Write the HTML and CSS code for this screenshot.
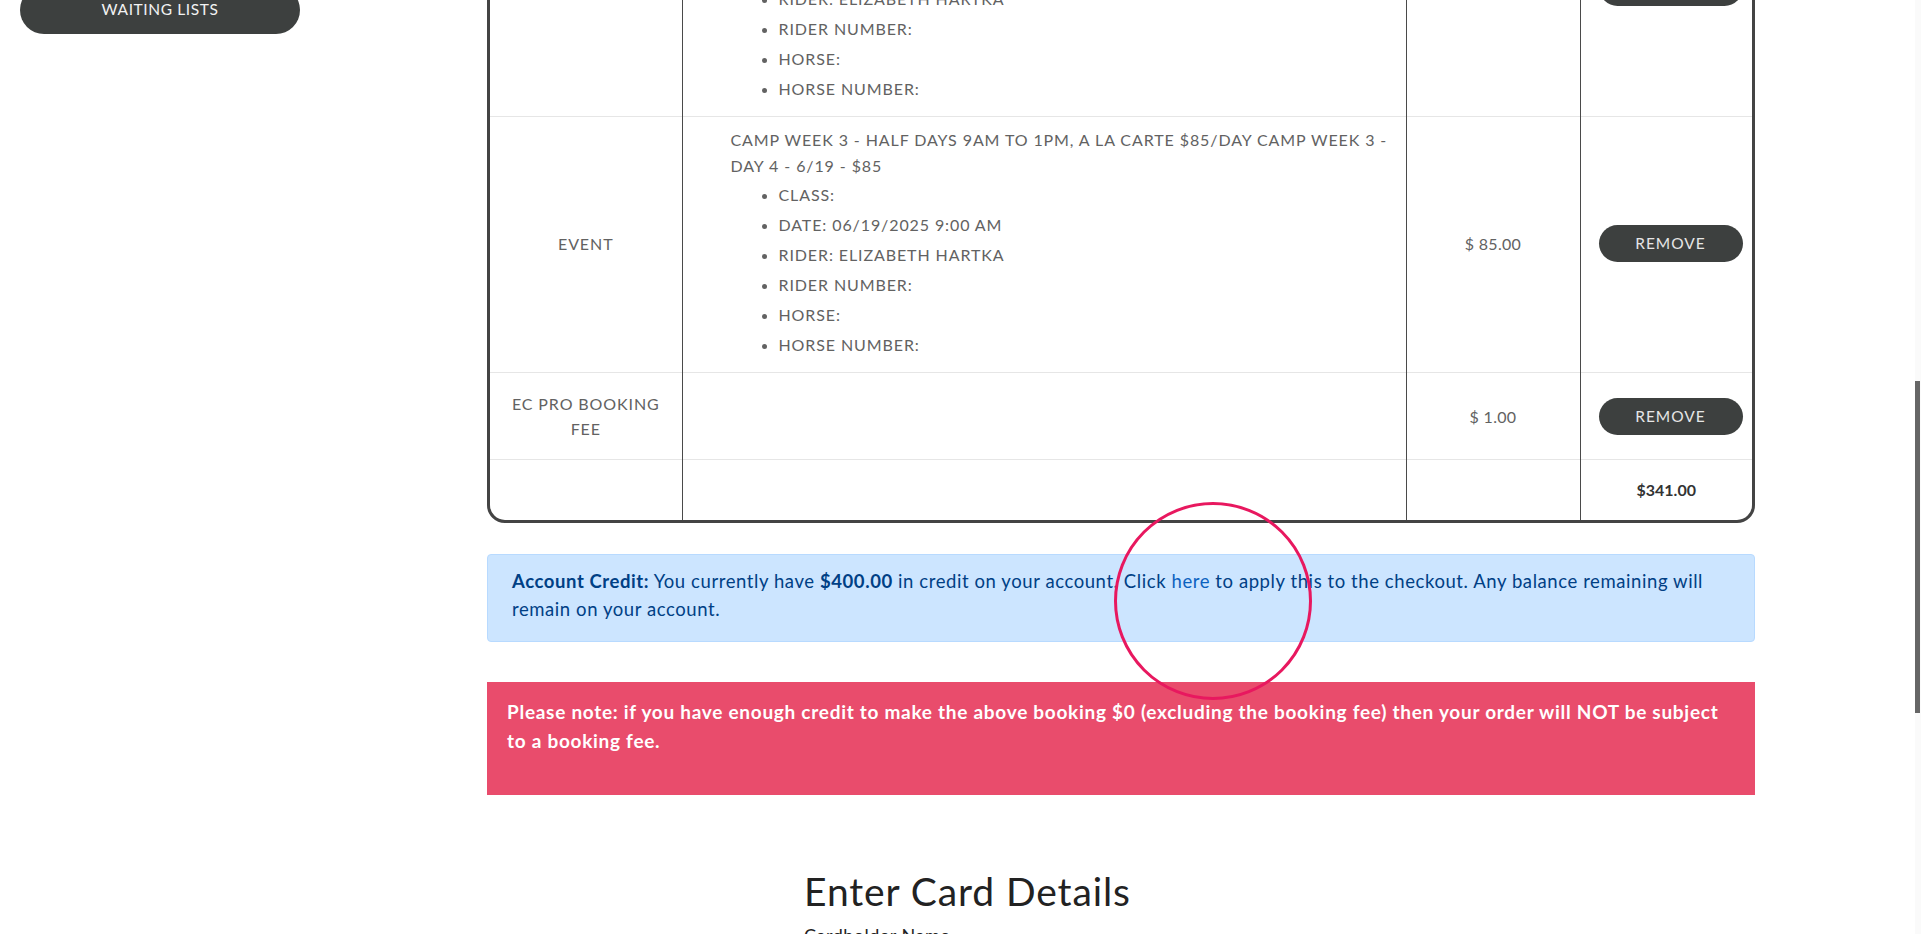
FILE: index.html
```html
<!DOCTYPE html>
<html lang="en">
<head>
<meta charset="utf-8">
<title>Checkout</title>
<link rel="stylesheet" href="styles.css">
</head>
<body>
<div class="page">
  <aside class="sidebar">
    <a class="side-btn" href="#">WAITING LISTS</a>
  </aside>
  <main class="main">
    <div class="cart">
      <table class="cart-table">
        <colgroup>
          <col class="c1"><col class="c2"><col class="c3"><col class="c4">
        </colgroup>
        <tbody>
          <tr>
            <td class="type">EVENT</td>
            <td class="desc">
              <div class="title">CAMP WEEK 3 - HALF DAYS 9AM TO 1PM, A LA CARTE $85/DAY CAMP WEEK 3 - DAY 3 - 6/18 - $85</div>
              <ul>
                <li>CLASS:</li>
                <li>DATE: 06/18/2025 9:00 AM</li>
                <li>RIDER: ELIZABETH HARTKA</li>
                <li>RIDER NUMBER:</li>
                <li>HORSE:</li>
                <li>HORSE NUMBER:</li>
              </ul>
            </td>
            <td class="price">$ 85.00</td>
            <td class="act"><a class="remove" href="#">REMOVE</a></td>
          </tr>
          <tr>
            <td class="type">EVENT</td>
            <td class="desc">
              <div class="title">CAMP WEEK 3 - HALF DAYS 9AM TO 1PM, A LA CARTE $85/DAY CAMP WEEK 3 - DAY 4 - 6/19 - $85</div>
              <ul>
                <li>CLASS:</li>
                <li>DATE: 06/19/2025 9:00 AM</li>
                <li>RIDER: ELIZABETH HARTKA</li>
                <li>RIDER NUMBER:</li>
                <li>HORSE:</li>
                <li>HORSE NUMBER:</li>
              </ul>
            </td>
            <td class="price">$ 85.00</td>
            <td class="act"><a class="remove" href="#">REMOVE</a></td>
          </tr>
          <tr class="fee">
            <td class="type">EC PRO BOOKING FEE</td>
            <td class="desc"></td>
            <td class="price">$ 1.00</td>
            <td class="act"><a class="remove" href="#">REMOVE</a></td>
          </tr>
          <tr class="total">
            <td></td>
            <td></td>
            <td></td>
            <td class="sum">$341.00</td>
          </tr>
        </tbody>
      </table>
    </div>

    <div class="alert-credit">
      <strong>Account Credit:</strong> You currently have <strong>$400.00</strong> in credit on your account. Click <a href="#" class="here">here</a> to apply this to the checkout. Any balance remaining will<br>remain on your account.
    </div>

    <div class="alert-note">
      Please note: if you have enough credit to make the above booking $0 (excluding the booking fee) then your order will NOT be subject<br>to a booking fee.
    </div>

    <section class="card">
      <h2 class="card-title">Enter Card Details</h2>
      <label class="card-label">Cardholder Name</label>
    </section>
  </main>
</div>
<div class="highlight"></div>
<div class="scrollbar"><div class="thumb"></div></div>
</body>
</html>
```

FILE: styles.css
```css
html, body {
  margin: 0;
  padding: 0;
  background: #fff;
  overflow: hidden;
  height: 934px;
}

body {
  font-family: "Lato", "Open Sans", sans-serif;
  color: #5e5e5e;
  position: relative;
}

.page {
  display: flex;
  align-items: flex-start;
}

.sidebar {
  width: 487px;
  flex: none;
  padding-left: 20px;
  box-sizing: border-box;
  margin-top: -14px;
}

.side-btn {
  display: block;
  width: 280px;
  height: 48px;
  line-height: 46px;
  border-radius: 24px;
  background: #3d403f;
  color: #f2f2f2;
  text-align: center;
  text-decoration: none;
  font-size: 15.5px;
  letter-spacing: 0.6px;
}

.main {
  width: 1268px;
  flex: none;
  margin-top: -142px;
}

.cart {
  border: 3px solid #444;
  border-radius: 18px;
  overflow: hidden;
}

.cart-table {
  width: 100%;
  border-collapse: collapse;
  table-layout: fixed;
  font-size: 16px;
  letter-spacing: 0.9px;
  color: #626262;
}

.c1 { width: 192px; }
.c2 { width: 724px; }
.c3 { width: 174px; }
.c4 { width: 172px; }

.cart-table td {
  border-top: 1px solid #e6e6e6;
  border-left: 1px solid #4a4a4a;
  vertical-align: middle;
  text-align: center;
  padding: 10px 18px 12px;
  line-height: 25.6px;
}

.cart-table tr:first-child td { border-top: none; }
.cart-table td:first-child { border-left: none; }

.cart-table td.desc {
  text-align: left;
  padding: 10px 16px 12px 48px;
}

.desc ul {
  margin: 2px 0 0;
  padding-left: 48px;
}

.desc li {
  line-height: 30px;
}

.fee td {
  padding-top: 18px;
  padding-bottom: 18px;
  line-height: 25px;
}

.total td {
  padding-top: 17px;
  padding-bottom: 17px;
}

.sum {
  font-weight: 700;
  color: #333;
  letter-spacing: 0;
}

.price { letter-spacing: 0.3px; }

.remove {
  display: inline-block;
  width: 144px;
  height: 37px;
  line-height: 37px;
  border-radius: 19px;
  background: #3d403f;
  color: #e6e6e6;
  text-decoration: none;
  font-size: 15.5px;
  letter-spacing: 1px;
  vertical-align: middle;
}

.alert-credit {
  margin-top: 31px;
  background: #cce5ff;
  border: 1px solid #b8daff;
  border-radius: 4px;
  color: #004085;
  font-size: 18.5px;
  letter-spacing: 0.58px;
  line-height: 28px;
  padding: 12px 24px 18px;
  white-space: nowrap;
}

.alert-credit strong { font-weight: 700; }

.here {
  color: #0b62c0;
  text-decoration: none;
}

.alert-note {
  margin-top: 40px;
  background: #e94c6c;
  color: #fff;
  font-weight: 700;
  font-size: 19px;
  letter-spacing: 0.72px;
  line-height: 29px;
  padding: 15px 8px 40px 20px;
  white-space: nowrap;
  overflow: hidden;
}

.card {
  padding-left: 317px;
  padding-top: 73px;
}

.card-title {
  margin: 0;
  font-size: 39px;
  letter-spacing: 0.9px;
  line-height: 46px;
  font-weight: 400;
  color: #222;
}

.card-label {
  display: block;
  margin-top: 10px;
  font-size: 18px;
  line-height: 22px;
  letter-spacing: 0.5px;
  color: #222;
}

.highlight {
  position: absolute;
  left: 1114px;
  top: 502px;
  width: 192px;
  height: 192px;
  border: 3px solid #e8185f;
  border-radius: 50%;
  pointer-events: none;
}

.scrollbar {
  position: absolute;
  top: 0;
  right: 0;
  width: 6px;
  height: 934px;
  background: #fafafa;
}

.thumb {
  margin-top: 381px;
  width: 5px;
  height: 332px;
  background: #666;
}
```
